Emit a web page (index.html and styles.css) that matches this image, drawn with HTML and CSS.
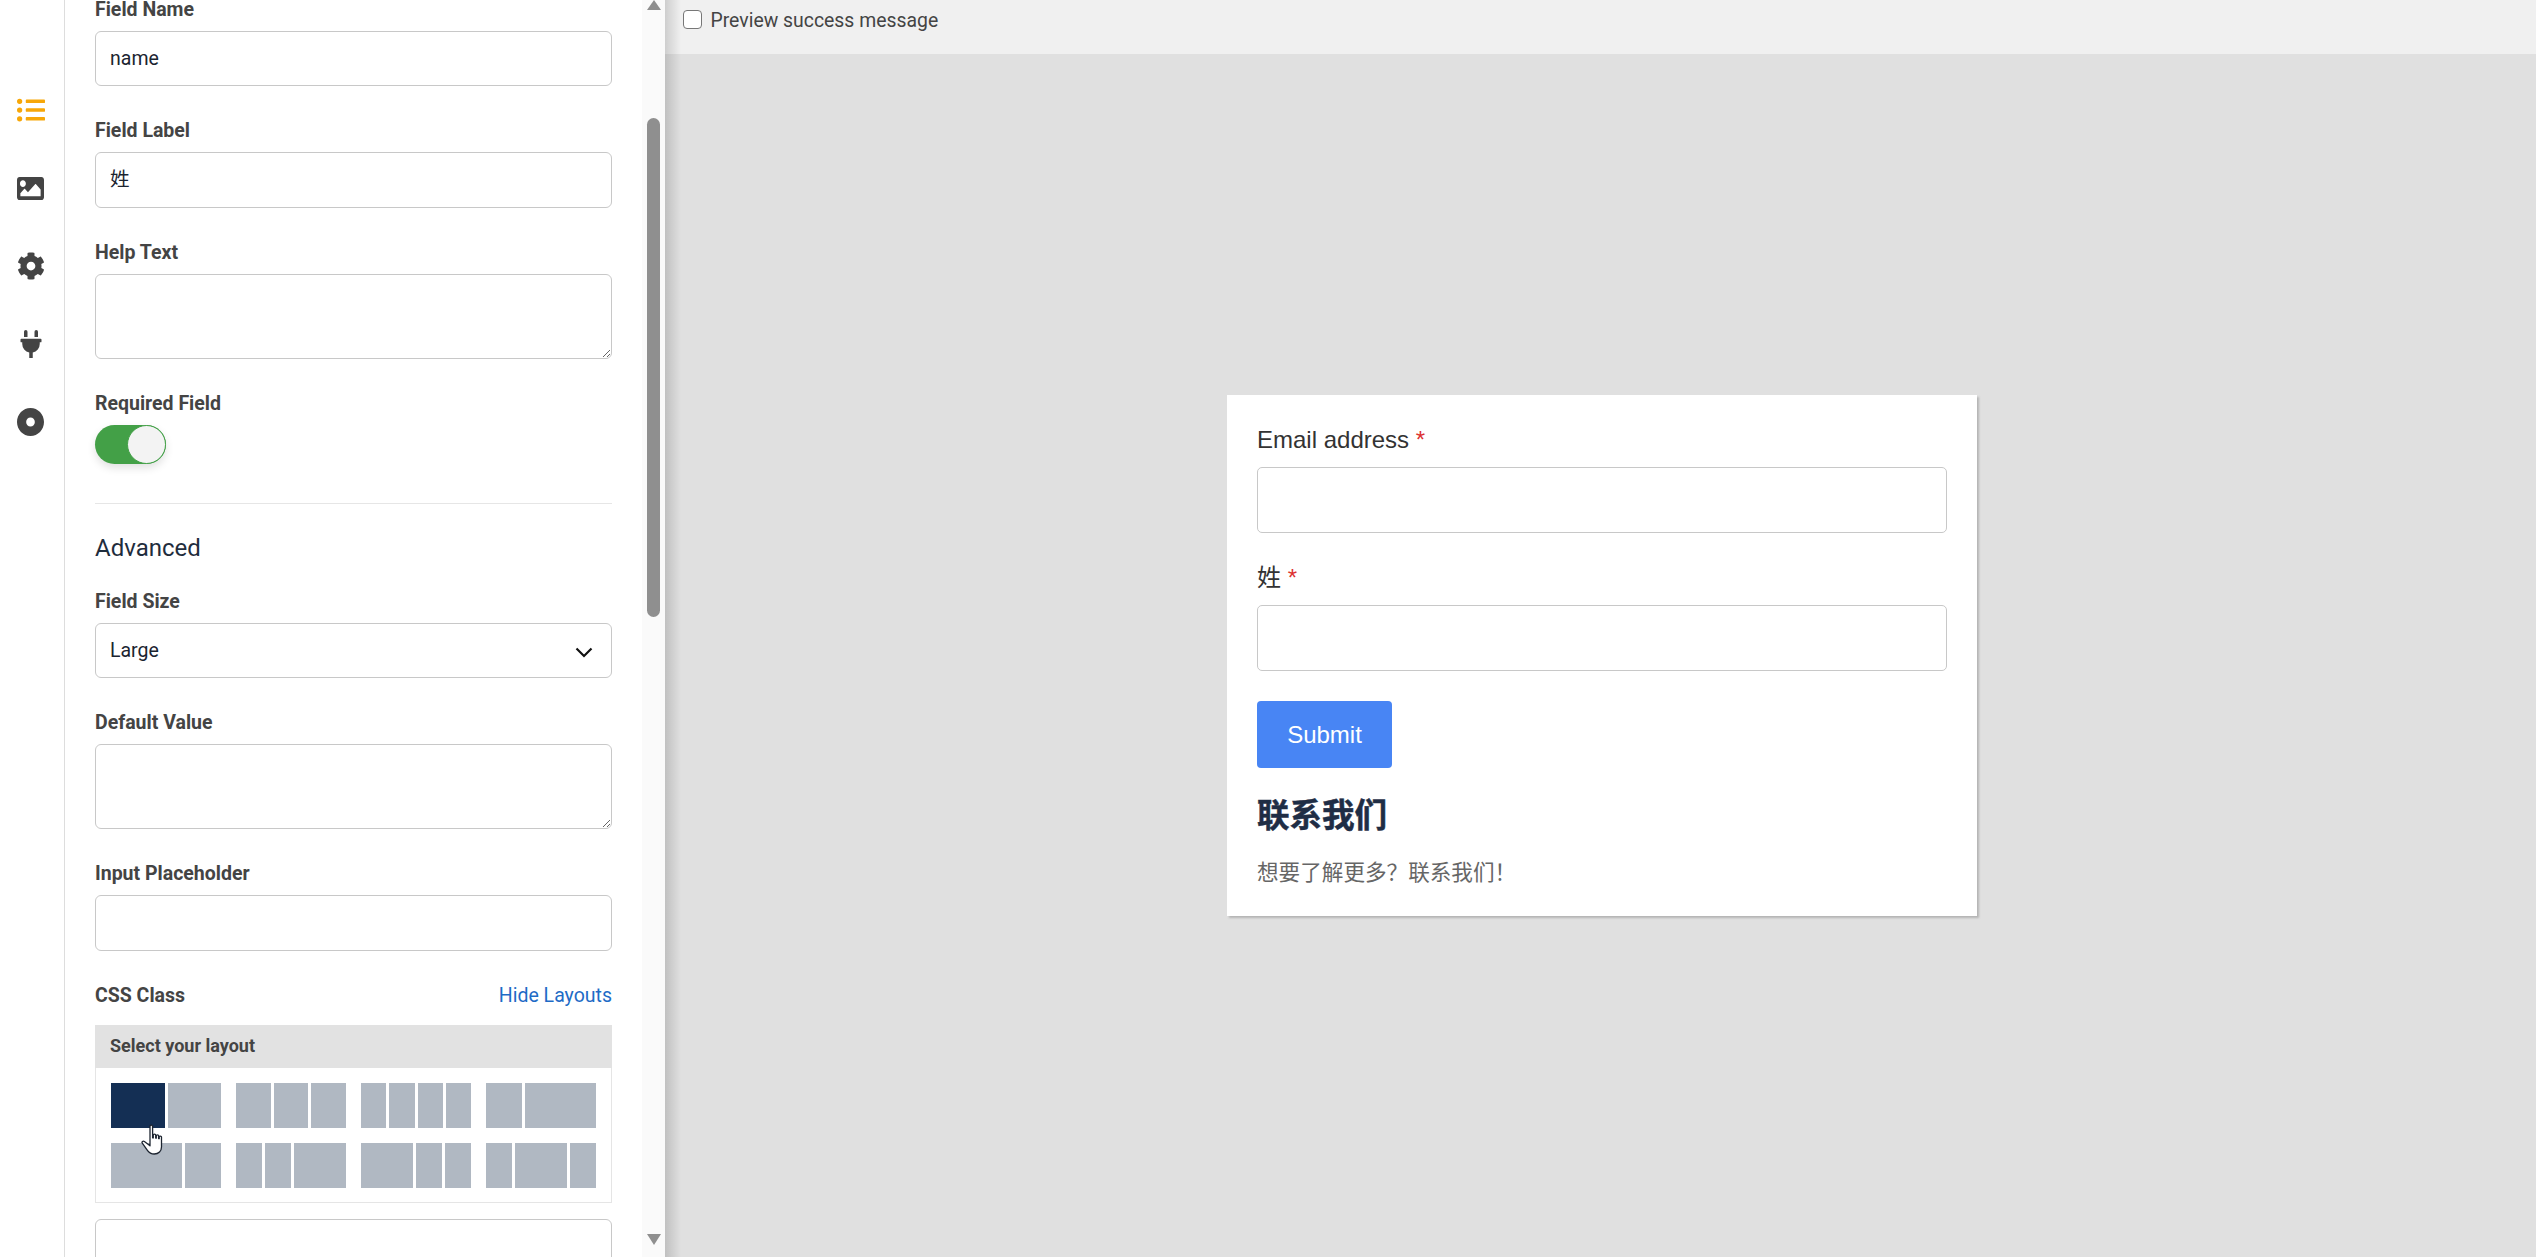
FILE: index.html
```html
<!DOCTYPE html>
<html lang="en">
<head>
<meta charset="utf-8">
<title>Form editor</title>
<link rel="stylesheet" href="styles.css">
</head>
<body>
<div class="app">
  <nav class="rail">
    <svg class="icon icon-active" viewBox="0 0 512 512"><path d="M48 48a48 48 0 1 0 48 48 48 48 0 0 0-48-48zm0 160a48 48 0 1 0 48 48 48 48 0 0 0-48-48zm0 160a48 48 0 1 0 48 48 48 48 0 0 0-48-48zm448 16H176a16 16 0 0 0-16 16v32a16 16 0 0 0 16 16h320a16 16 0 0 0 16-16v-32a16 16 0 0 0-16-16zm0-320H176a16 16 0 0 0-16 16v32a16 16 0 0 0 16 16h320a16 16 0 0 0 16-16V80a16 16 0 0 0-16-16zm0 160H176a16 16 0 0 0-16 16v32a16 16 0 0 0 16 16h320a16 16 0 0 0 16-16v-32a16 16 0 0 0-16-16z"/></svg>
    <svg class="icon icon-image" viewBox="0 64 512 384" preserveAspectRatio="none"><path d="M464 448H48c-26.51 0-48-21.49-48-48V112c0-26.51 21.49-48 48-48h416c26.51 0 48 21.49 48 48v288c0 26.51-21.49 48-48 48zM112 120c-30.928 0-56 25.072-56 56s25.072 56 56 56 56-25.072 56-56-25.072-56-56-56zM64 384h384V272l-87.515-87.515c-4.686-4.686-12.284-4.686-16.971 0L208 320l-55.515-55.515c-4.686-4.686-12.284-4.686-16.971 0L64 336v48z"/></svg>
    <svg class="icon" viewBox="0 0 512 512"><path d="M487.4 315.7l-42.6-24.6c4.3-23.2 4.3-47 0-70.2l42.6-24.6c4.9-2.8 7.1-8.6 5.5-14-11.1-35.6-30-67.8-54.7-94.6-3.8-4.1-10-5.1-14.8-2.3L380.8 110c-17.9-15.4-38.5-27.3-60.8-35.1V25.8c0-5.6-3.9-10.5-9.4-11.7-36.7-8.2-74.3-7.8-109.2 0-5.5 1.2-9.4 6.1-9.4 11.7V75c-22.2 7.9-42.8 19.8-60.8 35.1L88.7 85.5c-4.9-2.8-11-1.9-14.8 2.3-24.7 26.7-43.6 58.9-54.7 94.6-1.7 5.4.6 11.2 5.5 14L67.3 221c-4.3 23.2-4.3 47 0 70.2l-42.6 24.6c-4.9 2.8-7.1 8.6-5.5 14 11.1 35.6 30 67.8 54.7 94.6 3.8 4.1 10 5.1 14.8 2.3l42.6-24.6c17.9 15.4 38.5 27.3 60.8 35.1v49.2c0 5.6 3.9 10.5 9.4 11.7 36.7 8.2 74.3 7.8 109.2 0 5.5-1.2 9.4-6.1 9.4-11.7v-49.2c22.2-7.9 42.8-19.8 60.8-35.1l42.6 24.6c4.9 2.8 11 1.9 14.8-2.3 24.7-26.7 43.6-58.9 54.7-94.6 1.5-5.5-.7-11.3-5.6-14.1zM256 336c-44.1 0-80-35.9-80-80s35.9-80 80-80 80 35.9 80 80-35.9 80-80 80z"/></svg>
    <svg class="icon" viewBox="0 0 384 512"><path d="M320,32a32,32,0,0,0-64,0v96h64Zm48,128H16A16,16,0,0,0,0,176v32a16,16,0,0,0,16,16H32v32A160.07,160.07,0,0,0,160,412.8V512h64V412.8A160.07,160.07,0,0,0,352,256V224h16a16,16,0,0,0,16-16V176A16,16,0,0,0,368,160ZM128,32a32,32,0,0,0-64,0v96h64Z"/></svg>
    <svg class="icon icon-dot" viewBox="8 8 496 496" preserveAspectRatio="none"><path d="M256 8C119.033 8 8 119.033 8 256s111.033 248 248 248 248-111.033 248-248S392.967 8 256 8zm80 248c0 44.112-35.888 80-80 80s-80-35.888-80-80 35.888-80 80-80 80 35.888 80 80z"/></svg>
  </nav>

  <section class="panel">
    <div class="field">
      <label class="label">Field Name</label>
      <input class="control" type="text" value="name">
    </div>
    <div class="field">
      <label class="label">Field Label</label>
      <input class="control cjk-value" type="text" value="姓">
    </div>
    <div class="field">
      <label class="label">Help Text</label>
      <textarea class="control area"></textarea>
    </div>
    <div class="field">
      <label class="label">Required Field</label>
      <div class="toggle"><span class="knob"></span></div>
    </div>
    <hr class="divider">
    <h3 class="section-title">Advanced</h3>
    <div class="field">
      <label class="label">Field Size</label>
      <div class="select-wrap">
        <select class="control select"><option>Large</option></select>
        <svg class="chevron" viewBox="0 0 18 11"><path d="M1.5 1.5 9 9l7.5-7.5" fill="none" stroke="#111" stroke-width="2.2"/></svg>
      </div>
    </div>
    <div class="field">
      <label class="label">Default Value</label>
      <textarea class="control area"></textarea>
    </div>
    <div class="field">
      <label class="label">Input Placeholder</label>
      <input class="control" type="text">
    </div>
    <div class="field-head">
      <label class="label">CSS Class</label>
      <a class="link">Hide Layouts</a>
    </div>
    <div class="layouts">
      <div class="layouts-title">Select your layout</div>
      <div class="layouts-grid">
        <div class="opt"><i class="c1 on"></i><i class="c1"></i></div>
        <div class="opt"><i class="c1"></i><i class="c1"></i><i class="c1"></i></div>
        <div class="opt"><i class="c1"></i><i class="c1"></i><i class="c1"></i><i class="c1"></i></div>
        <div class="opt"><i class="c1"></i><i class="c2"></i></div>
        <div class="opt"><i class="c2"></i><i class="c1"></i></div>
        <div class="opt"><i class="c1"></i><i class="c1"></i><i class="c2"></i></div>
        <div class="opt"><i class="c2"></i><i class="c1"></i><i class="c1"></i></div>
        <div class="opt"><i class="c1"></i><i class="c2"></i><i class="c1"></i></div>
      </div>
      <svg class="cursor" viewBox="0 0 28 32"><path d="M9 2.2c0-1.5 2.6-1.5 2.6 0v11.6l.7.1V11c0-1.2 2.4-1.2 2.4 0v3l.6.1v-2.300c0-1.200 2.300-1.200 2.300 0v2.700l.6.1v-1.700c0-1.200 2.300-1.100 2.300.200v9.900c0 4-2.900 7-7.200 7-3.200 0-5.200-1.200-6.700-3.400L1.300 19.200c-1-1.300.8-2.700 2.100-1.700L9 21.800z" fill="#fff" stroke="#1c2430" stroke-width="1.300" stroke-linejoin="round"/></svg>
    </div>
    <input class="control next" type="text">
  </section>

  <div class="scrollbar">
    <span class="arrow-up"></span>
    <span class="thumb"></span>
    <span class="arrow-down"></span>
  </div>

  <main class="preview">
    <div class="topbar">
      <input class="check" type="checkbox">
      <span>Preview success message</span>
    </div>
    <div class="stage">
      <form class="card">
        <label class="f-label">Email address <span class="req">*</span></label>
        <div class="f-input"></div>
        <label class="f-label second">姓 <span class="req">*</span></label>
        <div class="f-input"></div>
        <div class="submit">Submit</div>
        <h2 class="f-title">联系我们</h2>
        <p class="f-text">想要了解更多？联系我们！</p>
      </form>
    </div>
  </main>
</div>
</body>
</html>
```

FILE: styles.css
```css
* { box-sizing: border-box; }
html, body { margin: 0; height: 100%; overflow: hidden; background: #fff; }
body { font-family: Roboto, "Noto Sans CJK SC", sans-serif; color: #444; }

.app { display: flex; height: 1257px; overflow: hidden; }

/* icon rail */
.rail {
  flex: 0 0 65px;
  border-right: 1px solid #ddd;
  display: grid;
  grid-auto-rows: 78px;
  justify-items: center;
  align-items: center;
  align-content: start;
  padding: 71px 3px 0 0;
}
.icon { width: 28px; height: 28px; fill: #444; display: block; }
.icon-active { fill: #f7a708; }
.icon-image { width: 27px; height: 23px; }
.icon-dot { width: 27px; height: 28px; }

/* settings panel */
.panel {
  flex: 0 0 577px;
  padding: 0 30px;
  overflow: hidden;
  background: #fff;
  height: 1257px;
}
.field { margin-bottom: 32px; }
.field:first-child { margin-top: -3.25px; }
.label {
  display: block;
  height: 24px;
  line-height: 26px;
  margin-bottom: 10px;
  font-size: 19.5px;
  font-weight: 700;
  color: #444;
}
.control {
  display: block;
  width: 100%;
  height: 55.5px;
  padding: 0 14px;
  border: 1px solid #c8c8c8;
  border-radius: 6px;
  background: #fff;
  font: 19.5px Roboto, "Noto Sans CJK SC", sans-serif;
  color: #1b2430;
  outline: none;
}
.cjk-value { padding-bottom: 5px; }
.area { height: 85px; resize: vertical; }
.toggle {
  width: 71px;
  height: 39px;
  border-radius: 20px;
  background: #43a047;
  position: relative;
  box-shadow: 0 4px 8px rgba(0,0,0,.12);
}
.knob {
  position: absolute;
  top: 0;
  right: 0;
  width: 39px;
  height: 39px;
  border-radius: 50%;
  background: #f3f3f3;
  border: 1px solid #43a047;
}
.divider { border: 0; border-top: 1px solid #e6e6e6; margin: 39px 0 0; }
.section-title {
  margin: 29px 0 26px;
  height: 30px;
  line-height: 30px;
  font-size: 24px;
  font-weight: 400;
  color: #1f2d3d;
}
.select-wrap { position: relative; }
.select { appearance: none; -webkit-appearance: none; }
.chevron { position: absolute; right: 19px; top: 24px; width: 18px; height: 11px; }
.field-head { display: flex; justify-content: space-between; align-items: center; height: 24px; margin-bottom: 18px; }
.field-head .label { margin: 0; }
.link { font-size: 19.5px; line-height: 26px; height: 24px; font-weight: 400; color: #1e6bc6; }

.layouts { position: relative; border: 1px solid #e5e5e5; border-top: 0; height: 178px; }
.layouts-title {
  height: 43px;
  line-height: 42px;
  margin: 0 -1px;
  padding-left: 15px;
  background: #e2e2e2;
  font-size: 18px;
  font-weight: 700;
  color: #444;
}
.layouts-grid {
  display: grid;
  grid-template-columns: repeat(4, 110px);
  grid-auto-rows: 45px;
  gap: 15px;
  padding: 15px;
}
.opt { display: flex; gap: 3px; }
.opt i { display: block; background: #b0b8c2; }
.opt .c1 { flex: 1 1 0; }
.opt .c2 { flex: 2 1 0; }
.opt .on { background: #142f54; }
.cursor { position: absolute; left: 45px; top: 99px; width: 28px; height: 32px; }
.next { margin-top: 16px; }

/* scrollbar */
.scrollbar {
  flex: 0 0 23px;
  background: #fafafa;
  display: flex;
  flex-direction: column;
  align-items: center;
  height: 1257px;
}
.arrow-up, .arrow-down { width: 0; height: 0; border-left: 7px solid transparent; border-right: 7px solid transparent; }
.arrow-up { border-bottom: 10px solid #8f8f8f; }
.arrow-down { border-top: 11px solid #8f8f8f; margin-top: 617px; }
.thumb { width: 13px; height: 499px; margin-top: 108px; border-radius: 7px; background: #8f8f8f; }

/* preview */
.preview { flex: 1; display: flex; flex-direction: column; position: relative; background: #e0e0e0; }
.preview::before {
  content: "";
  position: absolute;
  left: 0;
  top: 0;
  bottom: 0;
  width: 16px;
  background: linear-gradient(90deg, rgba(0,0,0,.14), rgba(0,0,0,0));
}
.topbar {
  height: 54px;
  flex: none;
  background: #f0f0f0;
  display: flex;
  align-items: flex-start;
  padding: 10px 0 0 18px;
  font-size: 19.4px;
  line-height: 21px;
  color: #444;
}
.check {
  appearance: none;
  -webkit-appearance: none;
  width: 19px;
  height: 19px;
  margin: 0 8.500px 0 0;
  border: 1.5px solid #777;
  border-radius: 4px;
  background: #fff;
}
.stage { flex: 1; display: flex; align-items: center; justify-content: center; padding-left: 3px; }
.card {
  width: 750px;
  height: 521px;
  background: #fff;
  padding: 30px;
  box-shadow: 2px 2px 2px #b4b4b4;
  font-family: "Liberation Sans", "Noto Sans CJK SC", sans-serif;
}
.f-label { display: block; height: 27px; line-height: 29px; margin-bottom: 15px; font-size: 24px; color: #333; }
.second { margin-top: 30.500px; }
.req { color: #dc3232; font-size: 24px; }
.f-input { height: 65.500px; background: #fff; border: 1px solid #c8c8c8; border-radius: 5px; }
.submit {
  width: 135px;
  height: 67px;
  line-height: 67px;
  margin-top: 30.500px;
  text-align: center;
  background: #4885f4;
  border-radius: 4px;
  color: #fff;
  font-size: 24px;
}
.f-title { margin: 28px 0 0; font-size: 32.500px; line-height: 40px; font-weight: 700; color: #1f2d45; -webkit-text-stroke: .5px #1f2d45; }
.f-text { margin: 22px 0 0; font-size: 21.600px; line-height: 30px; color: #666; }
```
